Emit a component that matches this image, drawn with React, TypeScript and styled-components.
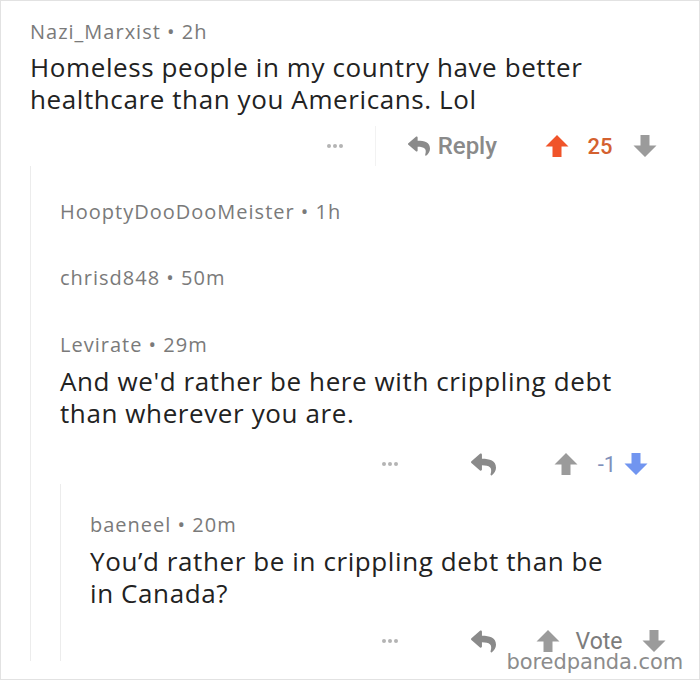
import React from 'react';
import styled, { createGlobalStyle } from 'styled-components';
import { FaReply } from 'react-icons/fa';

const GlobalStyle = createGlobalStyle`
    html, body {
        margin: 0;
        padding: 0;
        background: #ffffff;
    }
`;

const Page = styled.div`
    position: relative;
    width: 700px;
    height: 680px;
    box-sizing: border-box;
    border: 1px solid #e2e2e2;
    background: #ffffff;
    overflow: hidden;
    font-family: "Open Sans", Roboto, "Liberation Sans", sans-serif;
`;

const CommentBox = styled.div<{ $top?: number; $bottom?: number }>`
    padding-top: ${(p) => p.$top ?? 20}px;
    padding-bottom: ${(p) => p.$bottom ?? 0}px;
`;

const Thread = styled.div`
    border-left: 1px solid #ececec;
    padding-left: 29px;
`;

const Root = styled.div`
    padding-left: 29px;
`;

const Meta = styled.div`
    font-size: 20px;
    line-height: 24px;
    color: #7a7a7a;
    letter-spacing: 1px;
`;

const Body = styled.div<{ $gap?: number }>`
    margin-top: ${(p) => p.$gap ?? 8}px;
    font-size: 26px;
    line-height: 32px;
    color: #222222;
    letter-spacing: 0.6px;
`;

const ActionBar = styled.div<{ $gap: number }>`
    display: flex;
    align-items: center;
    justify-content: flex-end;
    height: 40px;
    margin-top: ${(p) => p.$gap}px;
    font-family: Roboto, "Liberation Sans", sans-serif;
`;

const Dots = styled.div`
    display: flex;
    gap: 2px;
    margin-right: 72px;

    span {
        width: 4px;
        height: 4px;
        border-radius: 50%;
        background: #b4b4b4;
    }
`;

const Divider = styled.div`
    width: 1px;
    height: 40px;
    background: #f2f2f2;
    margin: 0 31px 0 -40px;
`;

const ReplyCell = styled.div<{ $icon: number }>`
    display: flex;
    align-items: center;
    gap: 7px;
    padding-right: 6px;
    color: #8a8a8a;
    font-size: 24px;
    font-weight: 500;

    svg {
        width: ${(p) => p.$icon}px;
        height: ${(p) => p.$icon - 2}px;
    }
`;

const VoteCell = styled.div`
    width: 196px;
    display: flex;
    align-items: center;
    justify-content: center;
`;

const Score = styled.span<{ $color: string; $mx: string; $weight: number }>`
    color: ${(p) => p.$color};
    font-size: 22px;
    margin: ${(p) => p.$mx};
    font-weight: ${(p) => p.$weight};
`;

const VoteLabel = styled.span`
    color: #7c7c7c;
    font-size: 23px;
    margin: 0 20px 0 16px;
`;

const Watermark = styled.div`
    position: absolute;
    right: 16px;
    bottom: 5px;
    font-family: "DejaVu Sans", Verdana, sans-serif;
    font-size: 21px;
    color: #8c8c8c;
    letter-spacing: -0.1px;
`;

const Arrow = ({ down, color }: { down?: boolean; color: string }) => (
    <svg width="24" height="24" viewBox="0 0 24 24" style={{ transform: down ? 'rotate(180deg)' : undefined }}>
        <polygon points="12,1 23.5,12.5 16.5,12.5 16.5,23 7.5,23 7.5,12.5 0.5,12.5" fill={color} />
    </svg>
);

const DotsMenu = () => (
    <Dots>
        <span />
        <span />
        <span />
    </Dots>
);

const App: React.FC = () => (
    <Page>
        <GlobalStyle />
        <Root>
            <CommentBox $top={19}>
                <Meta>Nazi_Marxist • 2h</Meta>
                <Body $gap={7}>
                    Homeless people in my country have better
                    <br />
                    healthcare than you Americans. Lol
                </Body>
                <ActionBar $gap={11}>
                    <DotsMenu />
                    <Divider />
                    <ReplyCell $icon={24}>
                        <FaReply />
                        Reply
                    </ReplyCell>
                    <VoteCell>
                        <Arrow color="#f0542a" />
                        <Score $color="#d4612f" $mx="0 20px 0 18px" $weight={500}>25</Score>
                        <Arrow down color="#9b9b9b" />
                    </VoteCell>
                </ActionBar>
            </CommentBox>
            <Thread>
                <CommentBox $top={34} $bottom={20}>
                    <Meta>HooptyDooDooMeister • 1h</Meta>
                </CommentBox>
                <CommentBox $top={22} $bottom={20}>
                    <Meta>chrisd848 • 50m</Meta>
                </CommentBox>
                <CommentBox $top={23}>
                    <Meta>Levirate • 29m</Meta>
                    <Body $gap={8}>
                        And we'd rather be here with crippling debt
                        <br />
                        than wherever you are.
                    </Body>
                    <ActionBar $gap={15}>
                        <DotsMenu />
                        <ReplyCell $icon={27}>
                            <FaReply />
                        </ReplyCell>
                        <VoteCell>
                            <Arrow color="#9b9b9b" />
                            <Score $color="#7f90ba" $mx="0 8px 0 20px" $weight={400}>-1</Score>
                            <Arrow down color="#7195f0" />
                        </VoteCell>
                    </ActionBar>
                </CommentBox>
                <Thread>
                    <CommentBox $top={29}>
                        <Meta>baeneel • 20m</Meta>
                        <Body>
                            You’d rather be in crippling debt than be
                            <br />
                            in Canada?
                        </Body>
                        <ActionBar $gap={12}>
                            <DotsMenu />
                            <ReplyCell $icon={27}>
                                <FaReply />
                            </ReplyCell>
                            <VoteCell>
                                <Arrow color="#9b9b9b" />
                                <VoteLabel>Vote</VoteLabel>
                                <Arrow down color="#9b9b9b" />
                            </VoteCell>
                        </ActionBar>
                    </CommentBox>
                </Thread>
            </Thread>
        </Root>
        <Watermark>boredpanda.com</Watermark>
    </Page>
);

export default App;
